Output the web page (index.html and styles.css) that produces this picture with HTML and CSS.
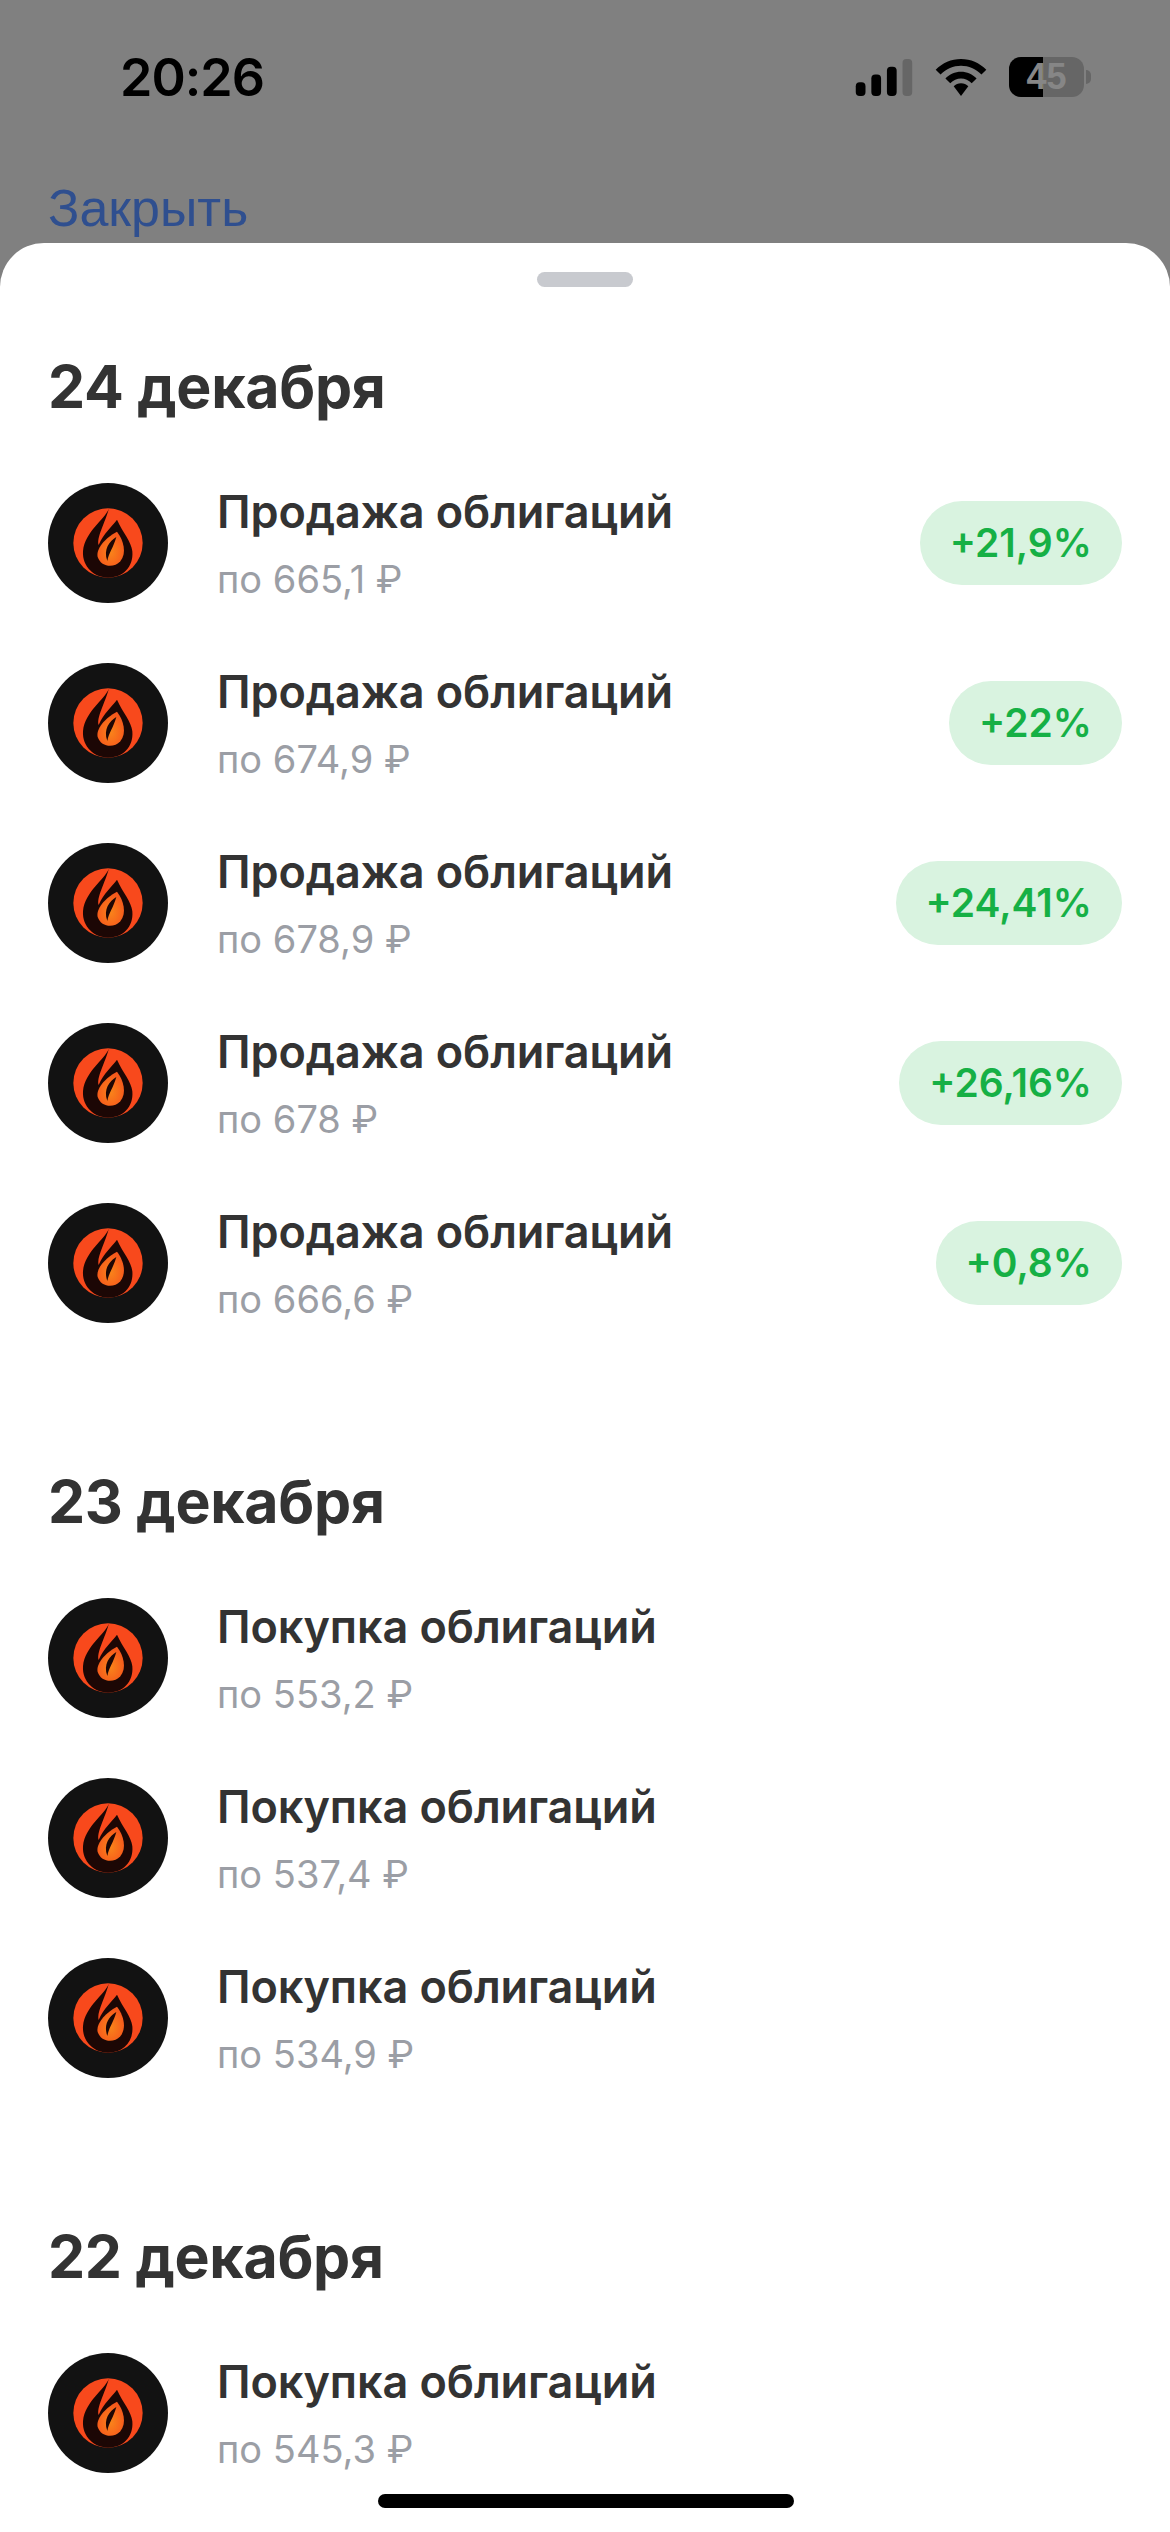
FILE: index.html
```html
<!DOCTYPE html>
<html lang="ru">
<head>
    <meta charset="UTF-8">
    <meta name="viewport" content="width=device-width, initial-scale=1.0">
    <title>Сделки</title>
    <link rel="stylesheet" href="styles.css">
</head>
<body>
<svg class="defs" width="0" height="0">
    <defs>
        <radialGradient id="flameFill" cx="50%" cy="60%" r="55%">
            <stop offset="0%" stop-color="#f9841a"/>
            <stop offset="100%" stop-color="#f6581c"/>
        </radialGradient>
        <symbol id="logo" viewBox="55 40 360 360">
            <circle cx="235" cy="220" r="180" fill="#121212"/>
            <circle cx="235" cy="220" r="104" fill="#f8491c"/>
            <path fill="#1c0705" d="M238 116C226 150 166 185 160 245C157 292 195 324 235 324C280 324 312 292 308 245C305 215 280 190 262 150C248 170 222 190 207 226C200 205 226 160 238 116Z"/>
            <path fill="url(#flameFill)" d="M262 186C282 212 292 250 272 275C252 297 214 292 204 262C198 238 226 205 262 186Z"/>
            <path fill="#1c0705" d="M260 202C240 214 220 238 233 274C237 250 252 232 260 202Z"/>
        </symbol>
    </defs>
</svg>

<div class="screen">
    <div class="backdrop">
        <div class="status-bar">
            <span class="time">20:26</span>
            <div class="status-icons">
                <svg width="58" height="37" viewBox="0 0 58 38">
                    <rect x="0" y="24" width="10" height="14" rx="4"/>
                    <rect x="16" y="16" width="10" height="22" rx="4"/>
                    <rect x="32" y="8" width="10" height="30" rx="4"/>
                    <rect x="48" y="0" width="10" height="38" rx="4" fill="#666"/>
                </svg>
                <svg width="52" height="37" viewBox="0 0 52 38">
                    <path d="M26 0C16 0 7 4 0 11L5 16C11 10 18 7 26 7S41 10 47 16L52 11C45 4 36 0 26 0Z"/>
                    <path d="M26 13C20 13 14 15.500 10 20L15 25C18 22 22 20 26 20S34 22 37 25L42 20C38 15.500 32 13 26 13Z"/>
                    <path d="M26 25C23 25 20.500 26 18.500 28L26 38L33.500 28C31.500 26 29 25 26 25Z"/>
                </svg>
                <div class="battery">
                    <div class="battery-body">
                        <div class="battery-level"></div>
                        <span class="battery-text">45</span>
                    </div>
                    <div class="battery-cap"></div>
                </div>
            </div>
        </div>
        <div class="close-link">Закрыть</div>
    </div>

    <div class="sheet">
        <div class="handle"></div>

        <section class="day">
            <h2>24 декабря</h2>
            <div class="deal">
                <svg class="logo"><use href="#logo"/></svg>
                <div class="deal-info">
                    <div class="deal-title">Продажа облигаций</div>
                    <div class="deal-price">по 665,1 ₽</div>
                </div>
                <div class="pill">+21,9%</div>
            </div>
            <div class="deal">
                <svg class="logo"><use href="#logo"/></svg>
                <div class="deal-info">
                    <div class="deal-title">Продажа облигаций</div>
                    <div class="deal-price">по 674,9 ₽</div>
                </div>
                <div class="pill">+22%</div>
            </div>
            <div class="deal">
                <svg class="logo"><use href="#logo"/></svg>
                <div class="deal-info">
                    <div class="deal-title">Продажа облигаций</div>
                    <div class="deal-price">по 678,9 ₽</div>
                </div>
                <div class="pill">+24,41%</div>
            </div>
            <div class="deal">
                <svg class="logo"><use href="#logo"/></svg>
                <div class="deal-info">
                    <div class="deal-title">Продажа облигаций</div>
                    <div class="deal-price">по 678 ₽</div>
                </div>
                <div class="pill">+26,16%</div>
            </div>
            <div class="deal">
                <svg class="logo"><use href="#logo"/></svg>
                <div class="deal-info">
                    <div class="deal-title">Продажа облигаций</div>
                    <div class="deal-price">по 666,6 ₽</div>
                </div>
                <div class="pill">+0,8%</div>
            </div>
        </section>

        <section class="day">
            <h2>23 декабря</h2>
            <div class="deal">
                <svg class="logo"><use href="#logo"/></svg>
                <div class="deal-info">
                    <div class="deal-title">Покупка облигаций</div>
                    <div class="deal-price">по 553,2 ₽</div>
                </div>
            </div>
            <div class="deal">
                <svg class="logo"><use href="#logo"/></svg>
                <div class="deal-info">
                    <div class="deal-title">Покупка облигаций</div>
                    <div class="deal-price">по 537,4 ₽</div>
                </div>
            </div>
            <div class="deal">
                <svg class="logo"><use href="#logo"/></svg>
                <div class="deal-info">
                    <div class="deal-title">Покупка облигаций</div>
                    <div class="deal-price">по 534,9 ₽</div>
                </div>
            </div>
        </section>

        <section class="day">
            <h2>22 декабря</h2>
            <div class="deal">
                <svg class="logo"><use href="#logo"/></svg>
                <div class="deal-info">
                    <div class="deal-title">Покупка облигаций</div>
                    <div class="deal-price">по 545,3 ₽</div>
                </div>
            </div>
        </section>
    </div>

    <div class="home-indicator"></div>
</div>
</body>
</html>
```

FILE: styles.css
```css
html, body {
    margin: 0;
    padding: 0;
}

body {
    font-family: Inter, "Noto Sans", sans-serif;
    background-color: #808080;
}

.defs {
    display: block;
    height: 0;
}

.screen {
    position: relative;
    width: 1170px;
    height: 2532px;
    overflow: hidden;
}

.backdrop {
    height: 243px;
    box-sizing: border-box;
    padding-top: 50px;
}

.status-bar {
    display: flex;
    justify-content: space-between;
    align-items: center;
    height: 54px;
    padding: 0 79px 0 120px;
}

.time {
    font-size: 52px;
    font-weight: 600;
    letter-spacing: -1px;
    color: #000;
}

.status-icons {
    display: flex;
    align-items: center;
    gap: 22px;
}

.battery {
    display: flex;
    align-items: center;
    gap: 2px;
}

.battery-body {
    position: relative;
    width: 75px;
    height: 40px;
    border-radius: 12px;
    overflow: hidden;
    background-color: #666;
}

.battery-level {
    width: 34px;
    height: 100%;
    background-color: #000;
}

.battery-text {
    position: absolute;
    top: 0;
    left: 0;
    right: 0;
    text-align: center;
    line-height: 40px;
    font-family: "Liberation Sans", sans-serif;
    font-size: 36px;
    font-weight: 700;
    color: #868686;
}

.battery-cap {
    width: 5px;
    height: 14px;
    border-radius: 0 5px 5px 0;
    background-color: #666;
}

.close-link {
    margin-top: 74px;
    padding-left: 48px;
    font-family: "Liberation Sans", sans-serif;
    font-size: 52px;
    line-height: 60px;
    color: #2f4f8f;
}

.sheet {
    background-color: #fff;
    border-radius: 44px 44px 0 0;
    padding: 29px 48px 0;
    height: 2289px;
    box-sizing: border-box;
}

.handle {
    width: 96px;
    height: 15px;
    margin: 0 auto;
    border-radius: 8px;
    background-color: #c8cacf;
}

.day {
    margin-bottom: 49px;
}

.day h2 {
    margin: 0;
    padding-top: 65px;
    height: 70px;
    font-size: 59px;
    line-height: 70px;
    font-weight: 700;
    letter-spacing: -0.3px;
    color: #333;
}

.deal {
    display: flex;
    align-items: center;
    height: 180px;
}

.day h2 + .deal {
    margin-top: 31px;
}

.logo {
    flex: none;
    width: 120px;
    height: 120px;
}

.deal-info {
    flex: 1;
    margin-left: 49px;
}

.deal-title {
    font-size: 45px;
    line-height: 54px;
    font-weight: 600;
    letter-spacing: -0.1px;
    color: #333;
}

.deal-price {
    margin-top: 17px;
    font-size: 38px;
    line-height: 46px;
    color: #9b9ea5;
}

.pill {
    padding: 0 30px;
    height: 84px;
    line-height: 84px;
    border-radius: 42px;
    font-size: 39px;
    font-weight: 600;
    color: #16b045;
    background-color: #d9f3e0;
}

.home-indicator {
    position: absolute;
    left: 378px;
    bottom: 24px;
    width: 416px;
    height: 14px;
    border-radius: 7px;
    background-color: #000;
}
```
